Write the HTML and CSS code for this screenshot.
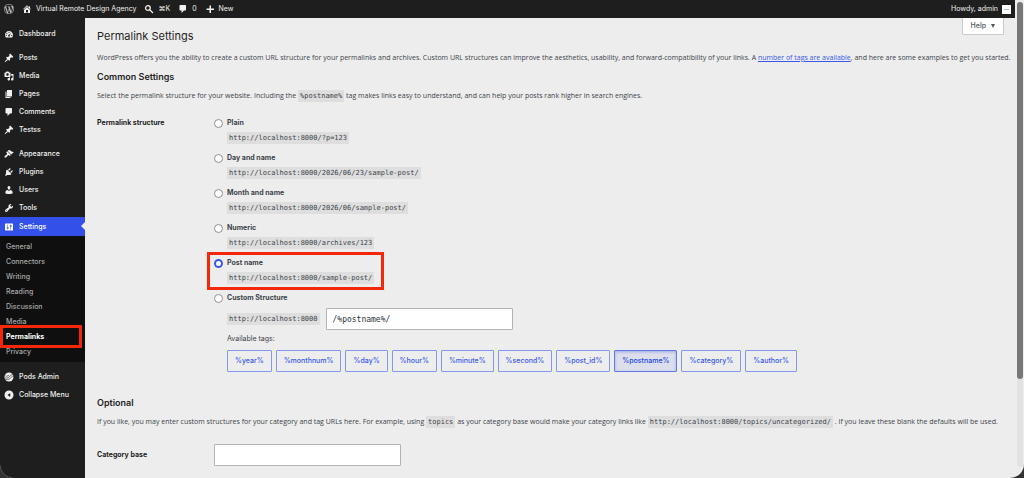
FILE: index.html
```html
<!DOCTYPE html>
<html lang="en">
<head>
  <meta charset="utf-8">
  <meta name="viewport" content="width=device-width">
  <title>Permalink Settings</title>
  <link rel="stylesheet" href="styles.css">
</head>
<body>
<!-- shared icons -->
<svg class="sprite" aria-hidden="true">
  <symbol id="i-pin" viewBox="0 0 20 20"><path d="M10.44 3.02l1.82-1.82 6.36 6.35-1.83 1.82c-1.05-.68-2.48-.57-3.41.36l-.75.75c-.92.93-1.04 2.35-.35 3.41l-1.83 1.82-2.41-2.41-2.8 2.79c-.42.42-3.38 2.71-3.8 2.29s1.86-3.39 2.28-3.81l2.79-2.79L4.1 9.36l1.83-1.82c1.05.69 2.48.57 3.4-.36l.75-.75c.93-.92 1.05-2.35.36-3.41z"/></symbol>
  <symbol id="i-comment" viewBox="0 0 20 20"><path d="M5 2h9c1.1 0 2 .9 2 2v7c0 1.1-.9 2-2 2h-2l-5 5v-5H5c-1.1 0-2-.9-2-2V4c0-1.1.9-2 2-2z"/></symbol>
</svg>

<div class="window">
  <div class="screen">
    <header class="adminbar">
      <a href="#" aria-label="About WordPress"><svg class="icon logo" viewBox="0 0 20 20"><path d="M20 10c0-5.51-4.49-10-10-10C4.48 0 0 4.49 0 10c0 5.52 4.48 10 10 10 5.51 0 10-4.48 10-10zM7.78 15.37L4.37 6.22c.55-.02 1.17-.08 1.17-.08.5-.06.44-1.13-.06-1.11 0 0-1.45.11-2.37.11-.18 0-.37 0-.58-.01C4.12 2.69 6.87 1.11 10 1.11c2.33 0 4.45.87 6.05 2.34-.68-.11-1.65.39-1.65 1.58 0 .74.45 1.36.9 2.1.35.61.55 1.36.55 2.46 0 1.49-1.4 5-1.4 5l-3.03-8.37c.54-.02.82-.17.82-.17.5-.05.44-1.25-.06-1.22 0 0-1.44.12-2.38.12-.87 0-2.33-.12-2.33-.12-.5-.03-.56 1.2-.06 1.22l.92.08 1.26 3.41zM17.41 10c.24-.64.74-1.87.43-4.25.7 1.29 1.05 2.71 1.05 4.25 0 3.29-1.73 6.24-4.4 7.78.97-2.59 1.94-5.2 2.92-7.78zM6.1 18.09C3.12 16.65 1.11 13.53 1.11 10c0-1.3.23-2.48.72-3.59C3.25 10.3 4.67 14.2 6.1 18.09zm4.03-6.63l2.58 6.98c-.86.29-1.76.45-2.71.45-.79 0-1.57-.11-2.29-.33.81-2.38 1.62-4.74 2.42-7.1z"/></svg></a>
      <a href="#"><svg class="icon" viewBox="0 0 20 20"><path d="M16 8.5l1.53 1.53-1.06 1.06L10 4.6l-6.47 6.49-1.06-1.06L10 2.5l4 4v-2h2v4zm-6-2.46l6 5.99V18H4v-5.97zM12 17v-5H8v5h4z"/></svg>Virtual Remote Design Agency</a>
      <a href="#"><svg class="icon" viewBox="0 0 20 20"><path fill="none" stroke="currentColor" stroke-width="2.6" d="M11.5 11.5L18 18M12.500 8a4.700 4.700 0 1 1-9.400 0a4.700 4.700 0 1 1 9.400 0z"/></svg>⌘K</a>
      <a href="#"><svg class="icon"><use href="#i-comment"/></svg>0</a>
      <a href="#"><svg class="icon" viewBox="0 0 20 20"><path d="M9 3h3v6h6v3h-6v6H9v-6H3V9h6z"/></svg>New</a>
      <a href="#" class="account">Howdy, admin<span class="avatar"></span></a>
    </header>

    <div class="columns">
      <nav class="sidebar">
        <ul class="menu">
          <li><a href="#"><svg class="icon" viewBox="0 0 20 20"><path fill-rule="evenodd" d="M3.800 17h12.400C17.300 15.600 18 13.900 18 12c0-4.400-3.600-8-8-8s-8 3.600-8 8c0 1.900.7 3.600 1.800 5zM10 5.500a1.200 1.200 0 1 1 0 2.400a1.200 1.200 0 1 1 0-2.400zM5.800 7.500a1.200 1.200 0 1 1 0 2.400a1.200 1.200 0 1 1 0-2.400zM4.500 11.500a1.200 1.200 0 1 1 0 2.400a1.200 1.200 0 1 1 0-2.400zM15.500 11.500a1.200 1.200 0 1 1 0 2.400a1.200 1.200 0 1 1 0-2.400zM14.500 7l-3 5.400c.8 1.400 0 2.800-1.500 2.800s-2.400-1.700-1.500-2.900c.4-.6 1-.8 1.600-.8z"/></svg>Dashboard</a></li>
          <li class="gap"><a href="#"><svg class="icon"><use href="#i-pin"/></svg>Posts</a></li>
          <li><a href="#"><svg class="icon" viewBox="0 0 20 20"><path d="M13 11V4c0-.55-.45-1-1-1h-1.670L9 1H5L3.670 3H2c-.55 0-1 .45-1 1v7c0 .55.45 1 1 1h10c.55 0 1-.45 1-1zM7 4.500c1.380 0 2.500 1.120 2.500 2.500S8.380 9.500 7 9.500 4.500 8.380 4.500 7 5.620 4.500 7 4.500zM14 6h5v10.500c0 1.380-1.120 2.500-2.500 2.500S14 17.880 14 16.500s1.120-2.500 2.500-2.500c.17 0 .34.02.5.05V9h-3V6zm-4 8.050V13h2v3.500c0 1.380-1.120 2.500-2.500 2.500S7 17.880 7 16.500 8.120 14 9.500 14c.17 0 .34.02.5.05z"/></svg>Media</a></li>
          <li><a href="#"><svg class="icon" viewBox="0 0 20 20"><path d="M6 15V2h10v13H6zm-1 1h8v2H3V5h2v11z"/></svg>Pages</a></li>
          <li><a href="#"><svg class="icon"><use href="#i-comment"/></svg>Comments</a></li>
          <li><a href="#"><svg class="icon"><use href="#i-pin"/></svg>Testss</a></li>
          <li class="gap"><a href="#"><svg class="icon" viewBox="0 0 20 20"><path d="M14.480 11.060L7.410 3.990l1.500-1.500c.5-.56 2.300-.47 3.510.32 1.210.8 1.430 1.280 2.910 2.100 1.180.64 2.450 1.260 4.450.85zm-.71.71L6.700 4.700 4.930 6.470c-.39.39-.39 1.020 0 1.410l1.060 1.060c.39.39.39 1.030 0 1.420-.6.6-1.430 1.110-2.210 1.690-.35.26-.7.53-1.010.84C1.430 14.230.4 16.080 1.400 17.070c.99 1 2.840-.03 4.180-1.360.31-.31.58-.66.85-1.020.57-.78 1.080-1.610 1.690-2.210.39-.39 1.020-.39 1.410 0l1.060 1.060c.39.39 1.020.39 1.410 0z"/></svg>Appearance</a></li>
          <li><a href="#"><svg class="icon" viewBox="0 0 20 20"><path d="M13.110 4.360L9.870 7.600 8 5.730l3.240-3.240c.35-.34 1.050-.2 1.560.32.52.51.66 1.210.31 1.550zm-8 1.770l.91-1.120 9.010 9.010-1.190.84c-.71.71-2.630 1.160-3.820 1.160H6.140L4.900 17.260c-.59.59-1.540.59-2.120 0-.59-.58-.59-1.530 0-2.120l1.240-1.240v-3.880c0-1.130.4-3.190 1.090-3.890zm7.260 3.970l3.240-3.240c.34-.35 1.040-.21 1.550.31.52.51.66 1.210.31 1.550l-3.240 3.250z"/></svg>Plugins</a></li>
          <li><a href="#"><svg class="icon" viewBox="0 0 20 20"><path d="M10 9.250c-2.270 0-2.730-3.440-2.730-3.440C7 4.020 7.820 2 9.970 2c2.160 0 2.980 2.020 2.710 3.810 0 0-.41 3.440-2.680 3.440zm0 2.570L12.720 10c2.390 0 4.520 2.330 4.520 4.530v2.490s-3.650 1.130-7.240 1.130c-3.650 0-7.240-1.130-7.240-1.130v-2.490c0-2.250 1.940-4.480 4.470-4.480z"/></svg>Users</a></li>
          <li><a href="#"><svg class="icon" viewBox="0 0 20 20"><path d="M16.680 9.770c-1.340 1.340-3.300 1.670-4.950.99l-5.410 6.520c-.99.99-2.590.99-3.580 0s-.99-2.590 0-3.570l6.520-5.420c-.68-1.650-.35-3.610.99-4.950 1.280-1.280 3.120-1.620 4.720-1.060l-2.890 2.890 2.820 2.820 2.860-2.870c.53 1.580.18 3.390-1.080 4.650zM3.810 16.210c.4.39 1.040.39 1.430 0 .4-.4.4-1.040 0-1.430-.39-.4-1.030-.4-1.430 0-.39.39-.39 1.030 0 1.430z"/></svg>Tools</a></li>
          <li>
            <a href="#" class="current"><svg class="icon" viewBox="0 0 20 20"><path d="M18 16V4c0-.55-.45-1-1-1H3c-.55 0-1 .45-1 1v12c0 .55.45 1 1 1h14c.55 0 1-.45 1-1zM8 11h1c.55 0 1 .45 1 1s-.45 1-1 1H8v1.500c0 .28-.22.5-.5.5s-.5-.22-.5-.5V13H6c-.55 0-1-.45-1-1s.45-1 1-1h1V5.500c0-.28.22-.5.5-.5s.5.22.5.5V11zm5-2h-1c-.55 0-1-.45-1-1s.45-1 1-1h1V5.500c0-.28.22-.5.5-.5s.5.22.5.5V7h1c.55 0 1 .45 1 1s-.45 1-1 1h-1v5.500c0 .28-.22.5-.5.5s-.5-.22-.5-.5V9z"/></svg>Settings</a>
            <ul class="submenu">
              <li><a href="#">General</a></li>
              <li><a href="#">Connectors</a></li>
              <li><a href="#">Writing</a></li>
              <li><a href="#">Reading</a></li>
              <li><a href="#">Discussion</a></li>
              <li><a href="#">Media</a></li>
              <li class="marked"><a href="#" class="active">Permalinks</a></li>
              <li><a href="#">Privacy</a></li>
            </ul>
          </li>
          <li class="gap"><a href="#"><svg class="icon" viewBox="0 0 20 20"><circle cx="10" cy="10" r="9"/><path fill="none" stroke="#1e1e1e" stroke-width="1.200" d="M2 12c5 1 8-1 10-4s4-3 6-2M3 15c6 1 9-1 11-4s3-2 5-2M3 8c3 1 5 0 7-2"/></svg>Pods Admin</a></li>
          <li><button type="button" class="collapse"><svg class="icon" viewBox="0 0 20 20"><path fill-rule="evenodd" d="M10 1a9 9 0 1 1 0 18a9 9 0 1 1 0-18zM12.500 6L7 10l5.500 4z"/></svg>Collapse Menu</button></li>
        </ul>
      </nav>

      <main class="content">
        <button type="button" class="help">Help <span class="caret"></span></button>
        <h1>Permalink Settings</h1>
        <p>WordPress offers you the ability to create a custom URL structure for your permalinks and archives. Custom URL structures can improve the aesthetics, usability, and forward-compatibility of your links. A <a href="#">number of tags are available</a>, and here are some examples to get you started.</p>
        <h2>Common Settings</h2>
        <p>Select the permalink structure for your website. Including the <code>%postname%</code> tag makes links easy to understand, and can help your posts rank higher in search engines.</p>

        <div class="form-row" role="radiogroup" aria-labelledby="structure-title">
          <div class="form-title" id="structure-title">Permalink structure</div>
          <ul class="options">
            <li><input type="radio" name="structure" id="s-plain"><label for="s-plain">Plain</label><code>http://localhost:8000/?p=123</code></li>
            <li><input type="radio" name="structure" id="s-day"><label for="s-day">Day and name</label><code>http://localhost:8000/2026/06/23/sample-post/</code></li>
            <li><input type="radio" name="structure" id="s-month"><label for="s-month">Month and name</label><code>http://localhost:8000/2026/06/sample-post/</code></li>
            <li><input type="radio" name="structure" id="s-numeric"><label for="s-numeric">Numeric</label><code>http://localhost:8000/archives/123</code></li>
            <li class="marked"><input type="radio" name="structure" id="s-post" checked><label for="s-post">Post name</label><code>http://localhost:8000/sample-post/</code></li>
            <li>
              <input type="radio" name="structure" id="s-custom"><label for="s-custom">Custom Structure</label>
              <div class="custom">
                <div class="custom-url">
                  <code>http://localhost:8000</code>
                  <input type="text" class="field" value="/%postname%/" aria-label="Custom structure">
                </div>
                <div class="tags-title">Available tags:</div>
                <div class="tags">
                  <button type="button">%year%</button>
                  <button type="button">%monthnum%</button>
                  <button type="button">%day%</button>
                  <button type="button">%hour%</button>
                  <button type="button">%minute%</button>
                  <button type="button">%second%</button>
                  <button type="button">%post_id%</button>
                  <button type="button" class="pressed">%postname%</button>
                  <button type="button">%category%</button>
                  <button type="button">%author%</button>
                </div>
              </div>
            </li>
          </ul>
        </div>

        <h2 class="optional">Optional</h2>
        <p>If you like, you may enter custom structures for your category and tag URLs here. For example, using <code>topics</code> as your category base would make your category links like <code>http://localhost:8000/topics/uncategorized/</code> . If you leave these blank the defaults will be used.</p>
        <div class="form-row base-row">
          <label class="form-title" for="category-base">Category base</label>
          <input type="text" class="field" id="category-base">
        </div>
      </main>
    </div>
  </div>
  <div class="scrollbar"><div class="track"><div class="thumb"></div></div></div>
</div>
</body>
</html>
```

FILE: styles.css
```css
* {
  box-sizing: border-box;
}

body {
  margin: 0;
  background: #333;
  color: #3c434a;
  font-family: Inter, "Liberation Sans", sans-serif;
  font-size: 7px;
  line-height: 12px;
}

ul {
  list-style: none;
  margin: 0;
  padding: 0;
}

button, input {
  font: inherit;
}

.sprite {
  display: none;
}

.icon {
  width: 10px;
  height: 10px;
  fill: currentColor;
  flex: none;
}

.window {
  display: flex;
  min-height: 100vh;
  background: #ededed;
  border-radius: 0 0 14px 14px;
  overflow: hidden;
}

.screen {
  flex: 1;
  display: flex;
  flex-direction: column;
}

/* top bar */
.adminbar {
  display: flex;
  align-items: center;
  gap: 8px;
  height: 18px;
  padding: 0 4px;
  background: #1e1e1e;
}

.adminbar a {
  display: flex;
  align-items: center;
  gap: 4px;
  color: #f0f0f0;
  text-decoration: none;
}

.adminbar .logo {
  color: #b4b6b8;
}

.adminbar .account {
  margin-left: auto;
}

.avatar {
  width: 9px;
  height: 9px;
  background: linear-gradient(#9fc3dc, #9fc3dc) center / 5px 1px no-repeat #fff;
}

.columns {
  flex: 1;
  display: flex;
}

/* left menu */
.sidebar {
  flex: none;
  width: 85px;
  padding-top: 7px;
  background: #1e1e1e;
}

.menu a, .collapse {
  display: flex;
  align-items: center;
  gap: 5px;
  height: 18px;
  padding-left: 4px;
  color: #f0f0f0;
  font-weight: 500;
  text-decoration: none;
}

.menu .collapse {
  border: 0;
  background: none;
}

.menu .gap {
  margin-top: 6px;
}

.menu .current {
  position: relative;
  height: 19px;
  background: #3350e8;
  color: #fff;
}

.current::after {
  content: "";
  position: absolute;
  right: 0;
  top: 5px;
  border: 4px solid transparent;
  border-left-width: 0;
  border-right-color: #ededed;
}

.submenu {
  padding: 3px 0;
  background: #0f0f0f;
}

.submenu a {
  height: 15px;
  padding-left: 6px;
  color: #a9a9a9;
}

.submenu .active {
  color: #fff;
  font-weight: 700;
}

/* red frames */
.marked {
  position: relative;
}

.marked::after {
  content: "";
  position: absolute;
  border: 3px solid #f5270b;
  pointer-events: none;
}

.submenu .marked::after {
  inset: -4px 3px -4px 0;
}

.options .marked::after {
  inset: -4px -10px -6px -7px;
}

/* page */
.content {
  flex: 1;
  position: relative;
  padding: 8px 4px 8px 12px;
}

.help {
  position: absolute;
  top: 0;
  right: 11px;
  display: flex;
  align-items: center;
  gap: 5px;
  height: 17px;
  padding: 0 8px;
  border: 1px solid #c8cacc;
  border-top: 0;
  border-radius: 0 0 2px 2px;
  background: #fff;
  color: #50575e;
  font-weight: 500;
}

.caret {
  border: 2px solid transparent;
  border-top: 4px solid #50575e;
  border-bottom: 0;
}

h1 {
  margin: 0;
  color: #1e1e1e;
  font-size: 11px;
  font-weight: 400;
  line-height: 20px;
}

h2 {
  margin: 6px 0;
  color: #1e1e1e;
  font-size: 9px;
  font-weight: 600;
  line-height: 14px;
}

.optional {
  margin-top: 24px;
}

p {
  margin: 6px 0;
  font-family: "Open Sans", "Liberation Sans", sans-serif;
}

p a {
  color: #3858e9;
}

code {
  padding: 2px;
  background: #dedede;
  font-family: "DejaVu Sans Mono", monospace;
  font-size: 7px;
  line-height: 8px;
}

.form-row {
  display: flex;
  margin-top: 14px;
}

.base-row {
  align-items: center;
  margin-top: 16px;
}

.form-title {
  flex: none;
  width: 117px;
  color: #1e1e1e;
  font-weight: 700;
  line-height: 14px;
}

.options {
  flex: 1;
}

.options li {
  display: grid;
  grid-template-columns: 13px auto;
  justify-content: start;
  width: fit-content;
  margin-bottom: 7px;
}

.options li:last-child {
  margin-bottom: 0;
}

.options label {
  font-weight: 700;
  line-height: 14px;
}

.options li > code {
  grid-column: 2;
  justify-self: start;
  margin-top: 2px;
}

input[type="radio"] {
  appearance: none;
  align-self: center;
  width: 9px;
  height: 9px;
  margin: 0;
  border: 1px solid #8c8f94;
  border-radius: 50%;
  background: #fff;
}

input[type="radio"]:checked {
  border: 2px solid #3858e9;
}

.custom {
  grid-column: 2;
}

.custom-url {
  display: flex;
  align-items: center;
  gap: 6px;
  margin-top: 3px;
}

.field {
  width: 187px;
  height: 22px;
  padding: 0 6px;
  border: 1px solid #b0b2b5;
  border-radius: 1px;
  background: #fff;
  color: #2c3338;
}

.custom .field {
  font-family: "DejaVu Sans Mono", monospace;
  font-size: 8px;
}

.tags-title {
  margin-top: 3px;
}

.tags {
  display: flex;
  gap: 4px;
  margin-top: 5px;
}

.tags button {
  height: 22px;
  padding: 0 7px;
  border: 1px solid #8496ee;
  border-radius: 1px;
  background: none;
  color: #3858e9;
  font-weight: 500;
}

.tags .pressed {
  border-color: #6378e4;
  background: #dcdeeb;
  box-shadow: inset 0 1px 3px #9fabe6;
  color: #2145e6;
}

/* page scroller */
.scrollbar {
  flex: none;
  width: 9px;
  padding: 2px 1px 11px 2px;
}

.track {
  height: 100%;
  border-radius: 3px;
  background: #e2e2e2;
}

.thumb {
  height: 81%;
  border-radius: 3px;
  background: #777;
}
```
